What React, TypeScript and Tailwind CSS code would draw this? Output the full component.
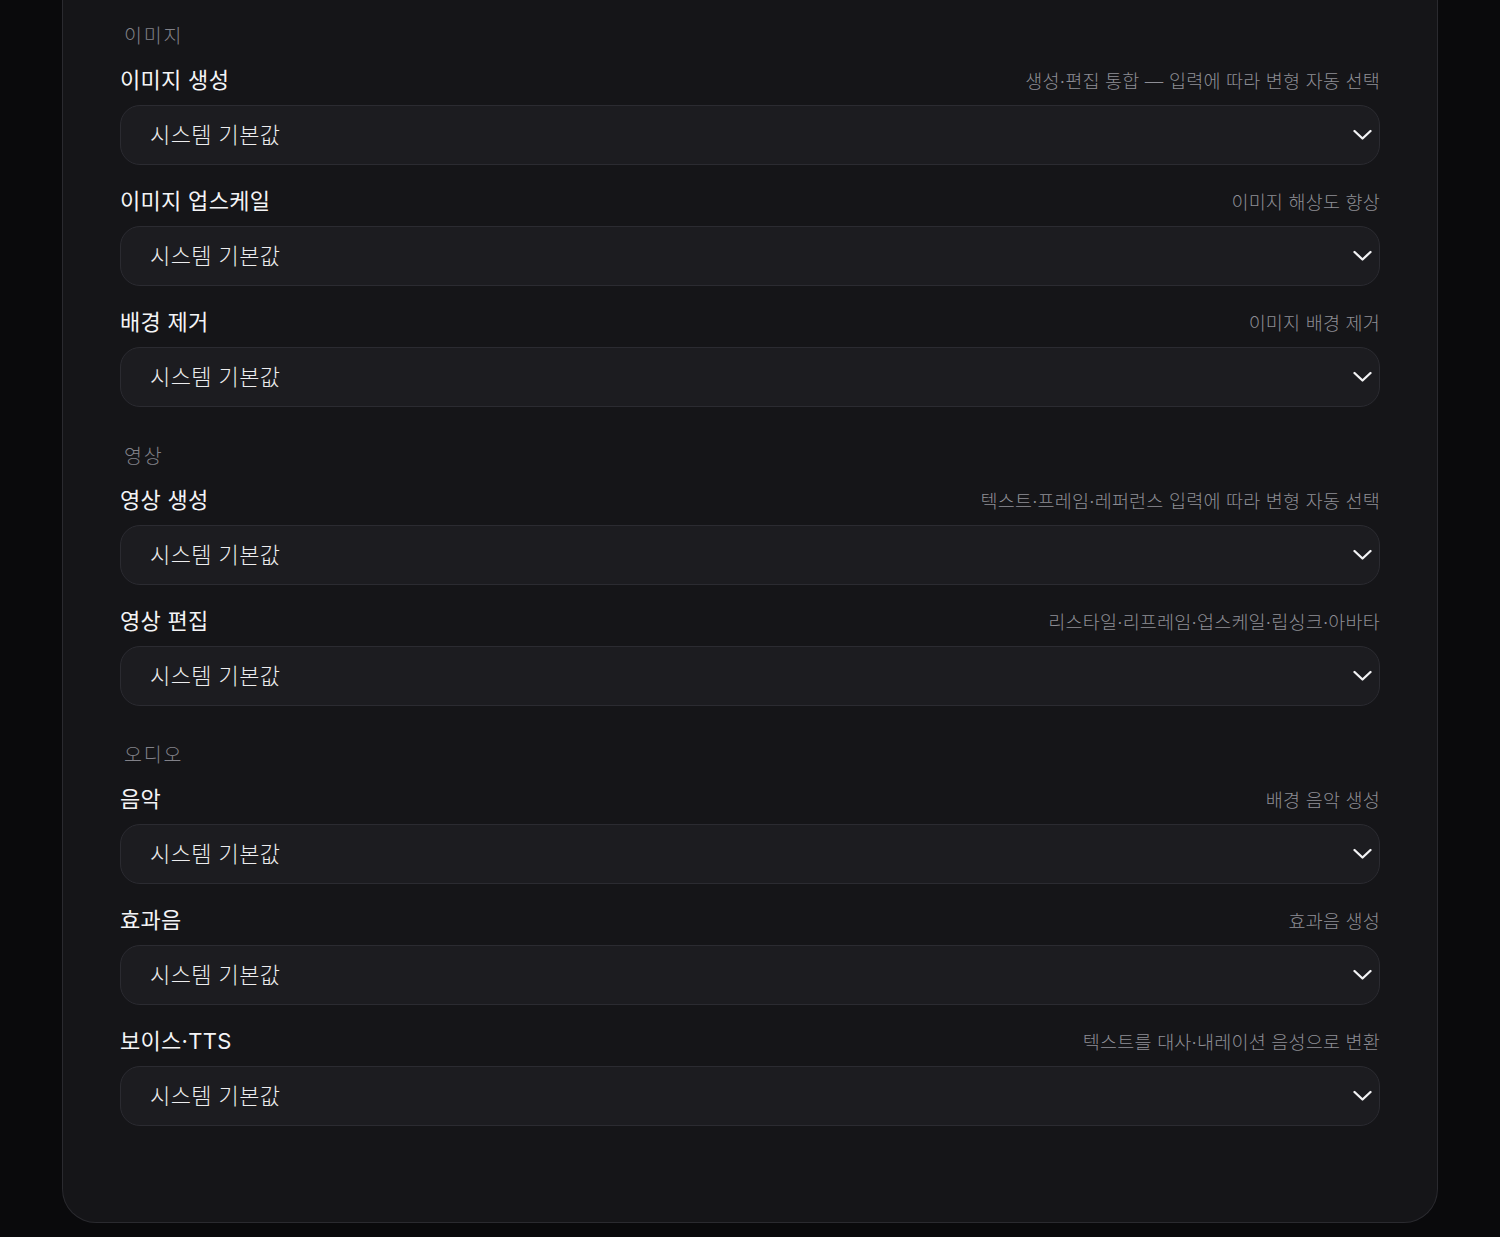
import React from 'react';

type Row = { label: string; hint: string };
type Section = { title: string; rows: Row[] };

const sections: Section[] = [
  {
    title: '이미지',
    rows: [
      { label: '이미지 생성', hint: '생성·편집 통합 — 입력에 따라 변형 자동 선택' },
      { label: '이미지 업스케일', hint: '이미지 해상도 향상' },
      { label: '배경 제거', hint: '이미지 배경 제거' },
    ],
  },
  {
    title: '영상',
    rows: [
      { label: '영상 생성', hint: '텍스트·프레임·레퍼런스 입력에 따라 변형 자동 선택' },
      { label: '영상 편집', hint: '리스타일·리프레임·업스케일·립싱크·아바타' },
    ],
  },
  {
    title: '오디오',
    rows: [
      { label: '음악', hint: '배경 음악 생성' },
      { label: '효과음', hint: '효과음 생성' },
      { label: '보이스·TTS', hint: '텍스트를 대사·내레이션 음성으로 변환' },
    ],
  },
];

const Chevron = () => (
  <svg width="19" height="11" viewBox="0 0 19 11" fill="none" className="absolute right-[7px] top-1/2 -translate-y-1/2">
    <polyline points="1.5,1.5 9.5,9 17.5,1.5" stroke="#f2f2f4" strokeWidth="2.3" strokeLinecap="round" strokeLinejoin="round" />
  </svg>
);

const ModelSelect = () => (
  <div className="relative h-[60px] rounded-[20px] border border-[#2b2b31] bg-[#1c1c20] flex items-center pl-[29px]">
    <span className="text-[22px] tracking-[0.4px] font-light text-[#ececee] leading-none">시스템 기본값</span>
    <Chevron />
  </div>
);

const App: React.FC = () => {
  return (
    <div
      className="min-h-screen bg-[#0a0a0c] pb-[14px]"
      style={{ fontFamily: 'Inter, "Noto Sans CJK KR", sans-serif' }}
    >
      <div className="mx-auto w-[1376px] bg-[#151518] border-x border-b border-[#2a2a2f] rounded-b-[34px] px-[57px] pt-[23px] pb-[96px]">
        <div className="flex flex-col gap-[36px]">
          {sections.map((section) => (
            <div key={section.title}>
              {/* section title */}
              <div className="h-[24px] leading-[26px] pl-[4px] text-[19.5px] tracking-[1.8px] font-light text-[#818188] mb-[18px]">
                {section.title}
              </div>
              <div className="flex flex-col gap-[21px]">
                {section.rows.map((row) => (
                  <div key={row.label}>
                    <div className="flex items-center justify-between h-[30px] mb-[10px]">
                      <span className="text-[22px] tracking-[0.3px] font-normal text-[#f4f4f6]">{row.label}</span>
                      <span className="text-[18.5px] tracking-[0.2px] font-light text-[#8e8e95] pt-[3px]">{row.hint}</span>
                    </div>
                    <ModelSelect />
                  </div>
                ))}
              </div>
            </div>
          ))}
        </div>
      </div>
    </div>
  );
};

export default App;
